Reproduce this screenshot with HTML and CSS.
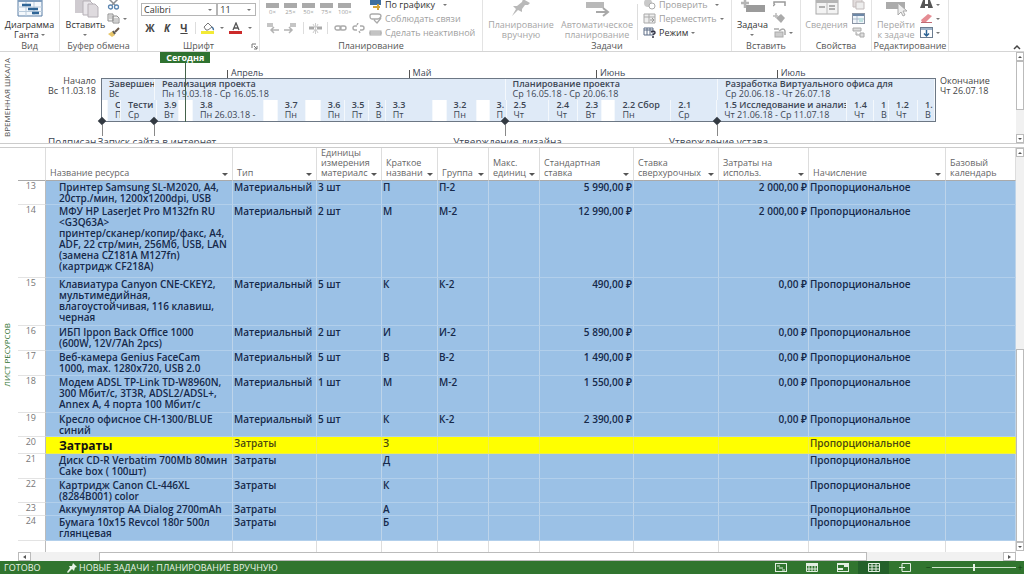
FILE: index.html
```html
<!DOCTYPE html>
<html lang="ru">
<head>
<meta charset="utf-8">
<title>Лист ресурсов</title>
<link rel="stylesheet" href="styles.css">
</head>
<body>
<header class="ribbon">
  <section class="group g-view">
    <div class="tools">
      <button class="big on"><svg width="26" height="20" viewBox="0 0 26 20"><path d="M1 0V18H25V0" fill="#f4f8fc" stroke="#5a7fa6"/><rect x="1" y="1" width="24" height="3" fill="#7d9cbd"/><path d="M9 4V18M17 4V18M1 9H25M1 13.500H25" stroke="#b9cbdc" fill="none"/><path d="M5 7H14M11 11H21M15 15H22" stroke="#2f6596" stroke-width="2.500"/></svg><span>Диаграмма<br>Ганта <i class="caret"></i></span></button>
    </div>
    <h2>Вид</h2>
  </section>
  <section class="group g-clip">
    <div class="tools">
      <button class="big on"><svg width="26" height="20" viewBox="0 0 26 20"><path d="M2 0H18V15H2Z" fill="#cfcbd0"/><path d="M10 3H17L20 6V17H10Z" fill="#e9e6ea" stroke="#b5b0b6"/><path d="M15 6H22L25 9V19H15Z" fill="#dedade" stroke="#b5b0b6"/></svg><span>Вставить<br><i class="caret"></i></span></button>
      <div class="stack">
        <button class="mini" aria-label="Вырезать"><svg width="13" height="11" viewBox="0 0 13 11"><path d="M2 0L8 6M11 0L5 6" stroke="#8b8f94" stroke-width="1.500"/><circle cx="3.500" cy="8" r="2" fill="none" stroke="#5b86b2" stroke-width="1.300"/><circle cx="9.500" cy="8" r="2" fill="none" stroke="#5b86b2" stroke-width="1.300"/></svg></button>
        <button class="mini" aria-label="Копировать"><svg width="13" height="11" viewBox="0 0 13 11"><path d="M1 1H6V8H1ZM6 3H10L12 5V10H6Z" fill="#f2f2f2" stroke="#8f8f8f"/><path d="M2 3H5M2 5H5M7 6H11M7 8H11" stroke="#aaa"/></svg><i class="caret"></i></button>
        <button class="mini" aria-label="Формат по образцу"><svg width="13" height="11" viewBox="0 0 13 11"><path d="M1 7L6 4L8 8L5 10Z" fill="#e8c66a"/><path d="M6 4L8 7" stroke="#555" stroke-width="2"/><path d="M8 5L12 1" stroke="#6b5a4b" stroke-width="2"/></svg></button>
      </div>
    </div>
    <h2>Буфер обмена</h2>
  </section>
  <section class="group g-font">
    <div class="tools column">
      <div class="selects">
        <label class="pick wide"><select aria-label="Шрифт"><option>Calibri</option></select><i class="caret"></i></label>
        <label class="pick"><select aria-label="Размер шрифта"><option>11</option></select><i class="caret"></i></label>
      </div>
      <div class="format">
        <button class="fmt"><b>Ж</b></button><button class="fmt"><b><em>К</em></b></button><button class="fmt"><b><u>Ч</u></b></button>
        <span class="vr"></span>
        <button class="fill" aria-label="Заливка"><svg width="14" height="12" viewBox="0 0 14 12"><path d="M3 5L7 1L11 5L7 8H5Z" fill="#fff" stroke="#777"/><path d="M11 5Q13 7 12 8" stroke="#44709c" fill="none" stroke-width="1.500"/><rect y="9" width="13" height="3" fill="#f3ea35"/></svg><i class="caret"></i></button>
        <button class="fill" aria-label="Цвет текста"><svg width="14" height="12" viewBox="0 0 14 12"><path d="M4 8L7 1L10 8M5 6H9" fill="none" stroke="#555" stroke-width="1.300"/><rect y="9" width="13" height="3" fill="#cc2a2a"/></svg><i class="caret"></i></button>
      </div>
    </div>
    <h2>Шрифт</h2>
    <button class="launcher" aria-label="Параметры шрифта"><svg width="7" height="7" viewBox="0 0 7 7"><path d="M1 5V1H5M3 3L6 6M6 3V6H3" fill="none" stroke="#777"/></svg></button>
  </section>
  <section class="group g-plan">
    <div class="tools">
      <div class="progress">
        <div class="percents"><button>0×</button><button>25×</button><button>50×</button><button>75×</button><button>100×</button></div>
        <div class="links">
          <button aria-label="Уменьшить отступ"><svg width="13" height="11" viewBox="0 0 13 11"><path d="M1 1H7M1 3H7M5 7H13M8 4L5 7L8 10" fill="none" stroke="#b3b3b3" stroke-width="1.500"/></svg></button>
          <button aria-label="Увеличить отступ"><svg width="13" height="11" viewBox="0 0 13 11"><path d="M6 1H12M6 3H12M0 7H8M5 4L8 7L5 10" fill="none" stroke="#b3b3b3" stroke-width="1.500"/></svg></button>
          <span class="vr"></span>
          <button aria-label="Прервать задачу"><svg width="13" height="11" viewBox="0 0 13 11"><path d="M0 5H5M8 5H13" stroke="#aaa" stroke-width="3"/><path d="M6.500 0V11M4 1L9 10M9 1L4 10" stroke="#ccc"/></svg></button>
          <span class="vr"></span>
          <button aria-label="Связать"><svg width="13" height="11" viewBox="0 0 13 11"><rect x="1" y="3" width="6" height="4" rx="2" fill="none" stroke="#aaa" stroke-width="1.400"/><rect x="6" y="3" width="6" height="4" rx="2" fill="none" stroke="#aaa" stroke-width="1.400"/></svg></button>
          <button aria-label="Разорвать связь"><svg width="13" height="11" viewBox="0 0 13 11"><path d="M5 3H3Q1 3 1 5T3 7H5M8 3H10Q12 3 12 5T10 7H8M6 0L5 2M8 10L7 8" fill="none" stroke="#aaa" stroke-width="1.400"/></svg></button>
        </div>
      </div>
      <div class="stack">
        <button class="mini on"><svg width="13" height="11" viewBox="0 0 13 11"><rect x="1" y="0" width="11" height="6" fill="#3f6f9f"/><path d="M4 8H11M9 5V11" stroke="#d6a53a" stroke-width="2"/></svg>По графику <i class="caret far"></i></button>
        <button class="mini"><svg width="13" height="11" viewBox="0 0 13 11"><path d="M1 3Q1 1 3 1H9Q12 1 12 3T9 6H3Q1 6 1 3ZM5 7L8 10L12 5" fill="none" stroke="#aaa" stroke-width="1.300"/></svg>Соблюдать связи</button>
        <button class="mini"><svg width="13" height="11" viewBox="0 0 13 11"><rect x="1" y="4" width="11" height="4" fill="#ddd" stroke="#aaa"/><path d="M0 6H13" stroke="#aaa"/></svg>Сделать неактивной</button>
      </div>
    </div>
    <h2>Планирование</h2>
  </section>
  <section class="group g-tasks">
    <div class="tools">
      <button class="big"><svg width="26" height="20" viewBox="0 0 26 20"><path d="M15 1L22 5L20 7L17 7L14 11L14 14L10 12L4 18L8 11L5 8L9 8L14 4Z" fill="#b9b9b9"/></svg><span>Планирование<br>вручную</span></button>
      <button class="big"><svg width="26" height="20" viewBox="0 0 26 20"><rect x="2" y="4" width="18" height="6" fill="#b9b9b9"/><path d="M12 14H23M19 10L24 14L19 18" stroke="#a8a8a8" stroke-width="2" fill="none"/></svg><span>Автоматическое<br>планирование</span></button>
      <span class="vr tall"></span>
      <div class="stack">
        <button class="mini"><svg width="13" height="11" viewBox="0 0 13 11"><circle cx="5" cy="4" r="4" fill="#c9c9c9"/><circle cx="9" cy="7" r="3" fill="#fff" stroke="#aaa"/></svg>Проверить <i class="caret far"></i></button>
        <button class="mini"><svg width="13" height="11" viewBox="0 0 13 11"><path d="M1 1H12V10H1ZM6 1V10M1 4H12" fill="#eee" stroke="#aaa"/><path d="M7 7H11M9 5L11 7L9 9" stroke="#999" fill="none"/></svg>Переместить <i class="caret"></i></button>
        <button class="mini on"><svg width="13" height="11" viewBox="0 0 13 11"><path d="M1 1H10V8H1ZM4 1V8M7 1V8M1 3H10" fill="#fff" stroke="#5d6c86"/><path d="M8 5Q12 3 12 6Q11 7 10 8M10 9V11" fill="none" stroke="#334" stroke-width="1.500"/></svg>Режим <i class="caret"></i></button>
      </div>
    </div>
    <h2>Задачи</h2>
  </section>
  <section class="group g-insert">
    <div class="tools">
      <button class="big on"><svg width="26" height="20" viewBox="0 0 26 20"><rect x="6" y="7" width="19" height="7" fill="#9b9b9b"/><path d="M5 1V10M1 5H9" stroke="#b5b5b5" stroke-width="2.500"/></svg><span>Задача<br><i class="caret"></i></span></button>
      <div class="stack">
        <button class="mini" aria-label="Суммарная задача"><svg width="13" height="11" viewBox="0 0 13 11"><path d="M1 5V3H12V7M0 7L2 5" fill="none" stroke="#999" stroke-width="1.500"/></svg></button>
        <button class="mini" aria-label="Веха"><svg width="13" height="11" viewBox="0 0 13 11"><path d="M8 1L12 5L8 10L3 5Z" fill="#aaa"/><path d="M3 0V5M0 3H5" stroke="#bbb" stroke-width="1.500"/></svg></button>
        <button class="mini" aria-label="Готовый набор"><svg width="13" height="11" viewBox="0 0 13 11"><rect x="2" y="5" width="8" height="5" fill="#ccc" stroke="#aaa"/><path d="M1 2H6M6 4Q11 0 12 4V8" fill="none" stroke="#aaa" stroke-width="1.500"/></svg><i class="caret"></i></button>
      </div>
    </div>
    <h2>Вставить</h2>
  </section>
  <section class="group g-props">
    <div class="tools">
      <button class="big"><svg width="26" height="20" viewBox="0 0 26 20"><rect x="2" y="1" width="22" height="15" fill="#f3f3f3" stroke="#aaa"/><rect x="2" y="1" width="22" height="4" fill="#b5b5b5"/><path d="M5 9H11M15 8H21M15 11H21" stroke="#999" stroke-width="1.500"/><path d="M13 5V16" stroke="#bbb"/></svg><span>Сведения<br>&nbsp;</span></button>
      <div class="stack">
        <button class="mini" aria-label="Заметки"><svg width="13" height="11" viewBox="0 0 13 11"><path d="M1 0H10V8H1Z" fill="#e2dcdc" stroke="#c3bcbc"/><path d="M4 3H12V10H4Z" fill="#eee" stroke="#c3bcbc"/></svg></button>
        <button class="mini" aria-label="Подробности"><svg width="13" height="11" viewBox="0 0 13 11"><rect x="0.500" y="0.500" width="12" height="10" fill="#f0f5fa" stroke="#8b95a5"/><rect x="1" y="1" width="11" height="2" fill="#6c87a7"/><path d="M1 6H12M5 3V10" stroke="#a9b8c9"/><rect x="7" y="5" width="4" height="4" fill="#bfe0df"/></svg></button>
        <button class="mini" aria-label="На временную шкалу"><svg width="13" height="11" viewBox="0 0 13 11"><path d="M1 1H9V4H1ZM4 5V8H8M8 6H12V10H8Z" fill="#ddd" stroke="#aaa"/></svg></button>
      </div>
    </div>
    <h2>Свойства</h2>
  </section>
  <section class="group g-edit">
    <div class="tools">
      <button class="big"><svg width="26" height="20" viewBox="0 0 26 20"><rect x="3" y="4" width="19" height="7" fill="#ababab"/><path d="M15 5V17L18 14L20 18L22 17L20 13H24Z" fill="#eee" stroke="#aaa"/></svg><span>Перейти<br>к задаче</span></button>
      <div class="stack">
        <button class="mini" aria-label="Найти"><svg width="13" height="11" viewBox="0 0 13 11"><path d="M3 1H5V5H8V1H10L13 9H8V7H5V9H0Z" fill="#555"/></svg><i class="caret"></i></button>
        <button class="mini" aria-label="Очистить"><svg width="13" height="11" viewBox="0 0 13 11"><path d="M1 7L8 1L12 3L6 9H2Z" fill="#e58c93"/><path d="M1 9.500H12" stroke="#c06a73"/></svg><i class="caret"></i></button>
        <button class="mini" aria-label="Заполнить"><svg width="13" height="11" viewBox="0 0 13 11"><rect x="0.500" y="0.500" width="12" height="10" fill="#fff" stroke="#6b7c90"/><rect x="1" y="1" width="11" height="2" fill="#9fb4c9"/><path d="M6.500 3V9M4 6.500L6.500 9L9 6.500" fill="none" stroke="#2f6596" stroke-width="1.500"/></svg><i class="caret"></i></button>
      </div>
    </div>
    <h2>Редактирование</h2>
  </section>
  <button class="collapse" aria-label="Свернуть ленту"><svg width="8" height="6" viewBox="0 0 8 6"><path d="M1 5L4 2L7 5" fill="none" stroke="#444" stroke-width="1.500"/></svg></button>
</header>

<section class="timeline">
  <div class="side"><span>ВРЕМЕННАЯ ШКАЛА</span></div>
  <p class="edge start">Начало<br>Вс 11.03.18</p>
  <div class="track">
    <div class="phases">
      <div><b>Завершен</b>Вс</div>
      <div><b>Реализация проекта</b>Пн 19.03.18 - Ср 16.05.18</div>
      <div><b>Планирование проекта</b>Ср 16.05.18 - Ср 20.06.18</div>
      <div><b>Разработка Виртуального офиса для</b>Ср 20.06.18 - Чт 26.07.18</div>
    </div>
    <div class="jobs">
      <div class="gap"></div>
      <div><b>С</b>П</div>
      <div><b>Тести</b>Ср</div>
      <div><b>3.9</b>Вт</div>
      <div class="gap"></div>
      <div><b>3.8</b>Пн 26.03.18 -</div>
      <div class="gap"></div>
      <div><b>3.7</b>Пн</div>
      <div class="gap"></div>
      <div><b>3.6</b>Пн</div>
      <div><b>3.5</b>Пт</div>
      <div><b>3.</b>В</div>
      <div><b>3.3</b>Пт</div>
      <div class="gap"></div>
      <div><b>3.2</b>Пн</div>
      <div class="gap"></div>
      <div><b>3.</b>П</div>
      <div><b>2.5</b>Чт</div>
      <div><b>2.4</b>Чт</div>
      <div><b>2.3</b>Вт</div>
      <div class="gap"></div>
      <div><b>2.2 Сбор</b>Пн</div>
      <div><b>2.1</b>Ср</div>
      <div><b>1.5 Исследование и анализ</b>Чт 21.06.18 - Ср 11.07.18</div>
      <div><b>1.4</b>Чт</div>
      <div><b>1</b>В</div>
      <div><b>1.2</b>Чт</div>
      <div><b>1.</b>В</div>
    </div>
    <span class="month april">Апрель</span>
    <span class="month may">Май</span>
    <span class="month june">Июнь</span>
    <span class="month july">Июль</span>
    <span class="today"><b>Сегодня</b></span>
    <span class="mark m1"><i></i><em>Подписан</em></span>
    <span class="mark m2"><i></i><em>Запуск сайта в интернет</em></span>
    <span class="mark m3"><i></i><em>Утверждение дизайна</em></span>
    <span class="mark m4"><i></i><em>Утверждение устава</em></span>
  </div>
  <p class="edge end">Окончание<br>Чт 26.07.18</p>
  <div class="vbar"><button class="up" aria-label="Вверх"></button><span class="thumb short"></span><span class="rest"></span><button class="down" aria-label="Вниз"></button></div>
</section>

<main class="sheet">
  <div class="side green"><span>ЛИСТ РЕСУРСОВ</span></div>
  <div class="body">
    <div class="view">
      <table>
        <colgroup><col class="c-num"><col class="c-name"><col class="c-type"><col class="c-unit"><col class="c-short"><col class="c-group"><col class="c-max"><col class="c-rate"><col class="c-over"><col class="c-use"><col class="c-accr"><col></colgroup>
        <thead><tr>
          <th></th>
          <th><div>Название ресурса<button aria-label="Фильтр"></button></div></th>
          <th><div>Тип<button aria-label="Фильтр"></button></div></th>
          <th><div>Единицы<br>измерения<br>материалс<button aria-label="Фильтр"></button></div></th>
          <th><div>Краткое<br>названи<button aria-label="Фильтр"></button></div></th>
          <th><div>Группа<button aria-label="Фильтр"></button></div></th>
          <th><div>Макс.<br>единиц<button aria-label="Фильтр"></button></div></th>
          <th><div>Стандартная<br>ставка<button aria-label="Фильтр"></button></div></th>
          <th><div>Ставка<br>сверхурочных<button aria-label="Фильтр"></button></div></th>
          <th><div>Затраты на<br>использ.<button aria-label="Фильтр"></button></div></th>
          <th><div>Начисление<button aria-label="Фильтр"></button></div></th>
          <th><div>Базовый<br>календарь</div></th>
        </tr></thead>
        <tbody>
          <tr class="l2 tight"><th>13</th><td>Принтер Samsung SL-M2020, A4,<br>20стр./мин, 1200x1200dpi, USB</td><td>Материальный</td><td>3 шт</td><td>П</td><td>П-2</td><td></td><td>5 990,00 ₽</td><td></td><td>2 000,00 ₽</td><td>Пропорциональное</td><td></td></tr>
          <tr class="l6"><th>14</th><td>МФУ HP LaserJet Pro M132fn RU<br>&lt;G3Q63A&gt;<br>принтер/сканер/копир/факс, A4,<br>ADF, 22 стр/мин, 256Мб, USB, LAN<br>(замена CZ181A M127fn)<br>(картридж CF218A)</td><td>Материальный</td><td>2 шт</td><td>М</td><td>М-2</td><td></td><td>12 990,00 ₽</td><td></td><td>2 000,00 ₽</td><td>Пропорциональное</td><td></td></tr>
          <tr class="l4"><th>15</th><td>Клавиатура Canyon CNE-CKEY2,<br>мультимедийная,<br>влагоустойчивая, 116 клавиш,<br>черная</td><td>Материальный</td><td>5 шт</td><td>К</td><td>К-2</td><td></td><td>490,00 ₽</td><td></td><td>0,00 ₽</td><td>Пропорциональное</td><td></td></tr>
          <tr class="l2"><th>16</th><td>ИБП Ippon Back Office 1000<br>(600W, 12V/7Ah 2pcs)</td><td>Материальный</td><td>2 шт</td><td>И</td><td>И-2</td><td></td><td>5 890,00 ₽</td><td></td><td>0,00 ₽</td><td>Пропорциональное</td><td></td></tr>
          <tr class="l2"><th>17</th><td>Веб-камера Genius FaceCam<br>1000, max. 1280x720, USB 2.0</td><td>Материальный</td><td>5 шт</td><td>В</td><td>В-2</td><td></td><td>1 490,00 ₽</td><td></td><td>0,00 ₽</td><td>Пропорциональное</td><td></td></tr>
          <tr class="l3"><th>18</th><td>Модем ADSL TP-Link TD-W8960N,<br>300 Мбит/с, 3T3R, ADSL2/ADSL+,<br>Annex A, 4 порта 100 Мбит/с</td><td>Материальный</td><td>1 шт</td><td>М</td><td>М-2</td><td></td><td>1 550,00 ₽</td><td></td><td>0,00 ₽</td><td>Пропорциональное</td><td></td></tr>
          <tr class="l2 tight"><th>19</th><td>Кресло офисное CH-1300/BLUE<br>синий</td><td>Материальный</td><td>5 шт</td><td>К</td><td>К-2</td><td></td><td>2 390,00 ₽</td><td></td><td>0,00 ₽</td><td>Пропорциональное</td><td></td></tr>
          <tr class="total"><th>20</th><td>Затраты</td><td>Затраты</td><td></td><td>З</td><td></td><td></td><td></td><td></td><td></td><td>Пропорциональное</td><td></td></tr>
          <tr class="l2"><th>21</th><td>Диск CD-R Verbatim 700Mb 80мин<br>Cake box ( 100шт)</td><td>Затраты</td><td></td><td>Д</td><td></td><td></td><td></td><td></td><td></td><td>Пропорциональное</td><td></td></tr>
          <tr class="l2 tight"><th>22</th><td>Картридж Canon CL-446XL<br>(8284B001) color</td><td>Затраты</td><td></td><td>К</td><td></td><td></td><td></td><td></td><td></td><td>Пропорциональное</td><td></td></tr>
          <tr class="l1"><th>23</th><td>Аккумулятор AA Dialog 2700mAh</td><td>Затраты</td><td></td><td>А</td><td></td><td></td><td></td><td></td><td></td><td>Пропорциональное</td><td></td></tr>
          <tr class="l2"><th>24</th><td>Бумага 10x15 Revcol 180г 500л<br>глянцевая</td><td>Затраты</td><td></td><td>Б</td><td></td><td></td><td></td><td></td><td></td><td>Пропорциональное</td><td></td></tr>
          <tr class="blank"><th></th><td></td><td></td><td></td><td></td><td></td><td></td><td></td><td></td><td></td><td></td><td></td></tr>
        </tbody>
      </table>
    </div>
    <div class="hbar"><button class="left" aria-label="Влево"></button><span class="before"></span><span class="thumb"></span><span class="after"></span><button class="right" aria-label="Вправо"></button></div>
  </div>
  <div class="vbar"><button class="up" aria-label="Вверх"></button><span class="rest"></span><span class="thumb long"></span><button class="down" aria-label="Вниз"></button></div>
</main>

<footer class="status">
  <span class="ready">ГОТОВО</span>
  <button class="mode"><svg width="10" height="10" viewBox="0 0 10 10"><path d="M6 0L10 4L8 4.500L7 8L5 6L1 10L0 9L3 5L2 3L5 3Z" fill="#e8f3e6"/></svg>НОВЫЕ ЗАДАЧИ : ПЛАНИРОВАНИЕ ВРУЧНУЮ</button>
  <nav class="views">
    <button aria-label="Диаграмма Ганта"><svg width="12" height="9" viewBox="0 0 12 9"><rect x="0.500" y="0.500" width="11" height="8" fill="none" stroke="#e3efe2"/><path d="M2 3H5M4 5H8M7 7H10" stroke="#e3efe2"/></svg></button>
    <button aria-label="Использование задач"><svg width="12" height="9" viewBox="0 0 12 9"><rect width="12" height="3" fill="#e3efe2"/><path d="M0.500 3V8.500H11.500V3M3 3V9M6 3V9M9 3V9M0 6H12" fill="none" stroke="#e3efe2"/></svg></button>
    <button aria-label="Планировщик"><svg width="12" height="9" viewBox="0 0 12 9"><rect x="0.500" y="0.500" width="11" height="8" fill="none" stroke="#e3efe2"/><path d="M0 1H12M1 6H6M7 3H12" stroke="#e3efe2" stroke-width="2"/></svg></button>
    <button class="active" aria-label="Лист ресурсов"><svg width="12" height="9" viewBox="0 0 12 9"><path d="M0.500 0.500H11.500V8.500H0.500ZM4 0V9M8 0V9M0 3H12M0 6H12" fill="none" stroke="#e3efe2"/></svg></button>
    <button aria-label="Отчет"><svg width="12" height="9" viewBox="0 0 12 9"><path d="M3 3V0.500H11.500V8.500H3V6M0 4.500H6M3 2.500V6.500" fill="none" stroke="#e3efe2"/></svg></button>
  </nav>
  <div class="zoom"><button aria-label="Мельче">−</button><input type="range" min="0" max="100" value="50" aria-label="Масштаб"><button aria-label="Крупнее">+</button></div>
</footer>
</body>
</html>
```
FILE: styles.css
```css
* { box-sizing: border-box; }

body {
  margin: 0;
  height: 100vh;
  display: flex;
  flex-direction: column;
  overflow: hidden;
  background: #fff;
  color: #444;
  font: 9px/10px "Open Sans", "Noto Sans", sans-serif;
}

button {
  border: 0;
  padding: 0;
  background: none;
  color: inherit;
  font: inherit;
}

h2, p { margin: 0; font: inherit; }
svg { display: block; flex: none; }

.caret {
  display: inline-block;
  border: 2px solid transparent;
  border-top-color: #777;
  border-bottom: 0;
  vertical-align: 2px;
}
.caret.far { margin-left: 5px; }

/* Ribbon */
.ribbon {
  flex: none;
  display: flex;
  height: 52px;
  border-bottom: 1px solid #d5d5d5;
}
.group {
  flex: none;
  position: relative;
  display: flex;
  flex-direction: column;
  border-right: 1px solid #e3e3e3;
}
.group h2 {
  height: 11px;
  line-height: 11px;
  text-align: center;
  color: #555;
}
.tools {
  height: 40px;
  display: flex;
  align-items: flex-end;
  overflow: hidden;
}
.tools.column { flex-direction: column; align-items: stretch; justify-content: flex-end; gap: 5px; }

.g-view { width: 60px; }
.g-clip { width: 78px; }
.g-font { width: 122px; }
.g-plan { width: 223px; }
.g-tasks { width: 249px; }
.g-insert { width: 69px; }
.g-props { width: 71px; }
.g-edit { width: 77px; }

.big {
  flex: 1;
  display: flex;
  flex-direction: column;
  align-items: center;
  gap: 2px;
  text-align: center;
  white-space: nowrap;
  color: #a6a6a6;
}
.g-clip .tools { padding-left: 4px; }
.g-tasks .big { flex: none; width: 76px; }
.on { color: #333; }
.stack { display: flex; flex-direction: column; gap: 3px; padding-bottom: 2px; }
.g-clip .stack { width: 30px; }
.g-insert .stack { width: 27px; }
.g-props .stack { width: 19px; }
.g-edit .stack { width: 28px; }
.g-plan .stack { padding-left: 4px; }
.g-tasks .stack { padding-left: 5px; }
.mini {
  height: 11px;
  display: flex;
  align-items: center;
  gap: 3px;
  white-space: nowrap;
  color: #a0a0a0;
}
.mini.on { color: #333; }
.vr { width: 1px; height: 12px; background: #ddd; }
.vr.tall { height: 36px; margin-left: 2px; }

.selects { display: flex; padding: 0 3px; }
.pick {
  width: 39px;
  height: 13px;
  display: flex;
  align-items: center;
  padding-right: 4px;
  border: 1px solid #b5b5b5;
}
.pick.wide { width: 77px; }
.pick select {
  flex: 1;
  min-width: 0;
  height: 11px;
  padding: 0 2px;
  border: 0;
  background: none;
  appearance: none;
  color: #333;
  font: inherit;
}
.format { display: flex; align-items: center; gap: 5px; height: 19px; padding: 0 4px 5px 6px; }
.fmt { width: 12px; color: #444; font-size: 10px; }
.fill { display: flex; align-items: center; gap: 5px; }
.launcher { position: absolute; right: 1px; bottom: 1px; }

.progress { width: 105px; padding: 0 0 6px 6px; }
.percents, .links { display: flex; justify-content: space-between; align-items: center; }
.percents { width: 85px; margin-bottom: 5px; }
.percents button {
  width: 13px;
  border-top: 5px solid #aaa;
  color: #a0a0a0;
  font-size: 6px;
  line-height: 9px;
}
.collapse { margin-left: auto; padding-right: 3px; align-self: flex-end; padding-bottom: 1px; }

/* Timeline */
.timeline {
  flex: none;
  height: 92px;
  display: flex;
  overflow: hidden;
  border-bottom: 1px solid #ccc;
}
.side {
  flex: none;
  width: 18px;
  display: flex;
  align-items: center;
  justify-content: center;
  color: #555;
}
.side span {
  writing-mode: vertical-rl;
  rotate: 180deg;
  margin-right: 4px;
  white-space: nowrap;
  font-size: 8px;
  line-height: 12px;
}
.side.green span { color: #2f7230; }
.edge { padding-top: 24px; white-space: nowrap; }
.edge.start { width: 83px; padding-right: 5px; text-align: right; }
.edge.end { width: 80px; padding-left: 4px; }
.track {
  flex: 1;
  position: relative;
  height: 44px;
  margin-top: 26px;
  display: flex;
  flex-direction: column;
  border: 1px solid #6c7784;
  color: #3c4654;
}
.track b { display: block; font-weight: 600; }
.phases, .jobs { display: grid; white-space: nowrap; }
.phases { height: 21px; grid-template-columns: 53fr 351fr 213fr 217fr; }
.phases div, .jobs div { overflow: hidden; padding-left: 7px; background: #dfeaf7; line-height: 10px; }
.phases div { border-right: 1px solid #f4f8fc; }
.jobs {
  height: 21px;
  grid-template-columns: 6fr 13fr 36fr 22fr 14fr 71fr 14fr 28fr 15fr 24fr 24fr 17fr 47fr 14fr 30fr 13fr 17fr 43fr 29fr 24fr 13fr 56fr 46fr 130fr 27fr 15fr 29fr 17fr;
}
.jobs div { min-width: 0; border-right: 1px solid #f4f8fc; }
.jobs .gap { padding: 0; background: #fff; }
.month {
  position: absolute;
  top: -9px;
  height: 8px;
  padding-left: 3px;
  border-left: 1px solid #555;
  line-height: 5px;
}
.april { left: 15%; }
.may { left: 36.8%; }
.june { left: 59.3%; }
.july { left: 81%; }
.today {
  position: absolute;
  left: 7%;
  top: -27px;
  width: 50px;
  height: 70px;
  background: linear-gradient(#44624a, #44624a) center / 1px 100% no-repeat;
}
.today b { background: #2f7230; color: #fff; text-align: center; font-weight: 700; line-height: 11px; }
.mark { position: absolute; top: 39px; width: 0; }
.mark i {
  position: absolute;
  left: -3px;
  width: 6px;
  height: 6px;
  rotate: 45deg;
  background: #333a42;
}
.mark::before { content: ""; position: absolute; top: 7px; height: 11px; border-left: 1px solid #888; }
.mark em { position: absolute; top: 19px; left: -54px; white-space: nowrap; font-size: 10px; font-style: normal; }
.m1 { left: 0; }
.m2 { left: 6.3%; }
.m2 em { left: -57px; }
.m3 { left: 48.4%; }
.m3 em { left: -52px; }
.m4 { left: 73.8%; }
.m4 em { left: -48px; }

/* Scroll bars */
.vbar { flex: none; width: 8px; display: flex; flex-direction: column; background: #f1f1f1; }
.sheet .vbar { margin-bottom: 10px; }
.vbar button, .hbar button {
  flex: none;
  display: flex;
  align-items: center;
  justify-content: center;
  background: #fff;
  border: 1px solid #bbb;
}
.vbar button { height: 9px; }
.hbar button { width: 13px; }
.vbar button::before, .hbar button::before { content: ""; border: 2px solid transparent; }
.up::before { border-bottom-color: #555 !important; border-top: 0 !important; }
.down::before { border-top-color: #555 !important; border-bottom: 0 !important; }
.left::before { border-right: 3px solid #555 !important; border-left: 0 !important; }
.right::before { border-left: 3px solid #555 !important; border-right: 0 !important; }
.thumb { background: #fff; border: 1px solid #bbb; }
.short { height: 49px; }
.rest { flex: 1; }
.long { flex: 1; }
.hbar { flex: none; display: flex; height: 9px; background: #f1f1f1; }
.before { flex: 68; }
.hbar .thumb { flex: 768; }
.after { flex: 136; }

/* Resource sheet */
.sheet { flex: 1; min-height: 0; display: flex; margin-top: 3px; border-top: 1px solid #ccc; }
.body { flex: 1; min-width: 0; display: flex; flex-direction: column; }
.view { flex: 1; min-height: 0; overflow: hidden; }
table { width: 100%; table-layout: fixed; border-collapse: separate; border-spacing: 0; }
.c-num { width: 28px; }
.c-name { width: 187px; }
.c-type { width: 84px; }
.c-unit { width: 65px; }
.c-short { width: 56px; }
.c-group { width: 51px; }
.c-max { width: 51px; }
.c-rate { width: 94px; }
.c-over { width: 85px; }
.c-use { width: 90px; }
.c-accr { width: 137px; }
th, td { padding: 0; font-weight: 400; vertical-align: top; text-align: left; white-space: nowrap; }
thead th {
  height: 32px;
  vertical-align: bottom;
  border-right: 1px solid #ddd;
  border-bottom: 1px solid #aaa;
  color: #666;
}
thead div { position: relative; padding: 0 0 2px 4px; overflow: hidden; }
thead button { position: absolute; right: 3px; bottom: 2px; width: 8px; height: 9px; background: #fff; }
thead button::before { content: ""; display: block; margin: 2px 1px 0; border: 3px solid transparent; border-top-color: #555; border-bottom: 0; }
tbody th {
  padding-right: 9px;
  text-align: right;
  color: #777;
  border-right: 1px solid #bbb;
  border-bottom: 1px solid #e3e3e3;
}
tbody td {
  padding: 1px 1px 0;
  background: #9bc1e6;
  border-right: 1px solid #bdd4ea;
  border-bottom: 1px solid #b2cfeb;
  color: #16294a;
  font-size: 10px;
  line-height: 11px;
  font-weight: 600;
}
tbody td:nth-child(2) { padding-left: 13px; }
tbody td:nth-child(8), tbody td:nth-child(10) { text-align: right; }
.l1 { height: 13px; }
.l2 { height: 25px; }
.l2.tight { height: 24px; }
.l3 { height: 37px; }
.l4 { height: 48px; }
.l6 { height: 73px; }
.total { height: 17px; }
.total td { background: #ff0; border-color: #f1ee4a; color: #4c4a10; }
.total td:nth-child(2) { color: #111; font-size: 12px; line-height: 15px; font-weight: 700; }
.blank { height: 40px; }
.blank td { background: #fff; border-color: #ddd; }

/* Status bar */
.status {
  flex: none;
  height: 13px;
  display: flex;
  align-items: center;
  background: #31752f;
  color: #e8f3e6;
}
.ready { width: 67px; padding-left: 4px; }
.mode { display: flex; align-items: center; gap: 2px; }
.views { display: flex; height: 13px; margin-left: auto; }
.views button { width: 31px; display: flex; align-items: center; justify-content: center; }
.views .active { background: #23602a; }
.zoom { display: flex; align-items: center; width: 104px; padding-left: 4px; }
.zoom button { color: #123d14; width: 8px; }
.zoom input { flex: 1; min-width: 0; height: 9px; margin: 0; appearance: none; background: none; }
.zoom input::-webkit-slider-runnable-track { height: 7px; background: linear-gradient(#cfe3cc, #cfe3cc) center / 100% 1px no-repeat; }
.zoom input::-webkit-slider-thumb { appearance: none; width: 2px; height: 7px; background: #e8f3e6; }
```
